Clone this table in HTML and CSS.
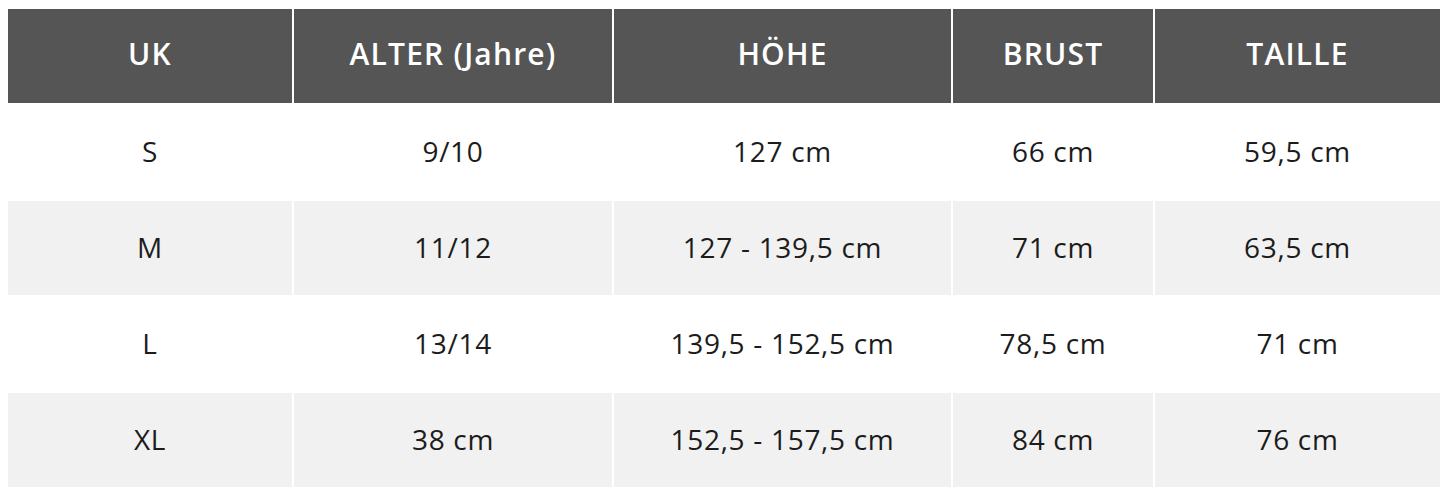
FILE: index.html
```html
<!DOCTYPE html>
<html lang="de">
<head>
<meta charset="utf-8">
<title>Größentabelle</title>
<link rel="stylesheet" href="styles.css">
</head>
<body>
<div class="size-table">
  <div class="cell head">UK</div>
  <div class="cell head">ALTER (Jahre)</div>
  <div class="cell head">HÖHE</div>
  <div class="cell head">BRUST</div>
  <div class="cell head">TAILLE</div>

  <div class="cell">S</div>
  <div class="cell">9/10</div>
  <div class="cell">127 cm</div>
  <div class="cell">66 cm</div>
  <div class="cell">59,5 cm</div>

  <div class="cell alt">M</div>
  <div class="cell alt">11/12</div>
  <div class="cell alt">127 - 139,5 cm</div>
  <div class="cell alt">71 cm</div>
  <div class="cell alt">63,5 cm</div>

  <div class="cell">L</div>
  <div class="cell">13/14</div>
  <div class="cell">139,5 - 152,5 cm</div>
  <div class="cell">78,5 cm</div>
  <div class="cell">71 cm</div>

  <div class="cell alt">XL</div>
  <div class="cell alt">38 cm</div>
  <div class="cell alt">152,5 - 157,5 cm</div>
  <div class="cell alt">84 cm</div>
  <div class="cell alt">76 cm</div>
</div>
</body>
</html>
```
FILE: styles.css
```css
html, body {
  margin: 0;
  padding: 0;
  background: #ffffff;
}
body {
  padding: 9px 5px 0 8px;
  font-family: "Open Sans", "DejaVu Sans", sans-serif;
}
.size-table {
  display: grid;
  grid-template-columns: 284px 318px 337px 200px 285px;
  grid-auto-rows: 94px;
  gap: 2px;
}
.cell {
  display: flex;
  align-items: center;
  justify-content: center;
  box-sizing: border-box;
  padding-bottom: 3px;
  background: #ffffff;
  color: #1c1c1c;
  font-size: 28px;
  font-weight: 400;
  letter-spacing: 0.7px;
}
.cell.alt {
  background: #f1f1f1;
}
.cell.head {
  background: #555555;
  color: #ffffff;
  font-weight: 600;
  font-size: 30px;
  letter-spacing: 1.2px;
  padding-bottom: 5px;
}
```
